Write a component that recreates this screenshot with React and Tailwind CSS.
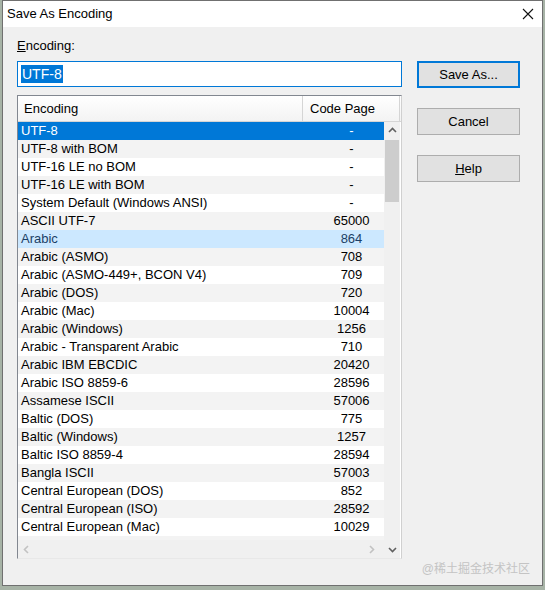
import React from "react";

const ROWS = [
  ["UTF-8", "-"],
  ["UTF-8 with BOM", "-"],
  ["UTF-16 LE no BOM", "-"],
  ["UTF-16 LE with BOM", "-"],
  ["System Default (Windows ANSI)", "-"],
  ["ASCII UTF-7", "65000"],
  ["Arabic", "864"],
  ["Arabic (ASMO)", "708"],
  ["Arabic (ASMO-449+, BCON V4)", "709"],
  ["Arabic (DOS)", "720"],
  ["Arabic (Mac)", "10004"],
  ["Arabic (Windows)", "1256"],
  ["Arabic - Transparent Arabic", "710"],
  ["Arabic IBM EBCDIC", "20420"],
  ["Arabic ISO 8859-6", "28596"],
  ["Assamese ISCII", "57006"],
  ["Baltic (DOS)", "775"],
  ["Baltic (Windows)", "1257"],
  ["Baltic ISO 8859-4", "28594"],
  ["Bangla ISCII", "57003"],
  ["Central European (DOS)", "852"],
  ["Central European (ISO)", "28592"],
  ["Central European (Mac)", "10029"],
  ["Central European (Windows)", "1250"],
];

function Chevron({ dir, className }) {
  const d = {
    up: "M2 7 L5.5 3.5 L9 7",
    down: "M2 4 L5.5 7.5 L9 4",
    left: "M7 2 L3.5 5.5 L7 9",
    right: "M4 2 L7.5 5.5 L4 9",
  }[dir];
  return (
    <svg width="11" height="11" viewBox="0 0 11 11" className={className}>
      <path d={d} fill="none" stroke="currentColor" strokeWidth="1.6" />
    </svg>
  );
}

function Row({ name, page, i }) {
  let cls = i % 2 === 1 ? "bg-[#f3f3f3] text-black" : "bg-white text-black";
  if (i === 0) cls = "bg-[#0078d7] text-white";
  if (i === 6) cls = "bg-[#cce8ff] text-[#1b3f66]";
  return (
    <div className={`flex h-[18px] items-center whitespace-nowrap ${cls}`}>
      <div className="w-[285px] shrink-0 pl-[3px] leading-[18px]">{name}</div>
      <div className="w-[97px] shrink-0 text-center leading-[18px]">{page}</div>
    </div>
  );
}

function Button({ children, focused }) {
  return (
    <button
      className={`h-[27px] w-[103px] bg-[#e1e1e1] text-[13px] text-black ${
        focused ? "border-2 border-[#0078d7]" : "border border-[#adadad]"
      }`}
    >
      {children}
    </button>
  );
}

export default function App() {
  return (
    <div
      className="h-[590px] w-[545px] bg-[#a7b3a6] pl-[2px]"
      style={{ fontFamily: '"Liberation Sans", "Noto Sans CJK SC", sans-serif' }}
    >
      <div className="flex h-[586px] w-[541px] flex-col border border-[#707070] bg-[#f0f0f0]">
        {/* title bar */}
        <div className="flex h-[26px] shrink-0 items-center justify-between bg-white pl-[4px] pr-[8px]">
          <span className="text-[13px] text-black">Save As Encoding</span>
          <svg width="12" height="12" viewBox="0 0 12 12">
            <path d="M1 1 L11 11 M11 1 L1 11" stroke="#111" strokeWidth="1.1" />
          </svg>
        </div>

        <div className="flex gap-[15px] pl-[14px] pt-[11px]">
          <div className="flex w-[385px] flex-col">
            <div className="h-[23px] text-[13px] leading-[16px] text-black">
              <span className="underline">E</span>ncoding:
            </div>
            <div className="flex h-[26px] items-center border border-[#0078d7] bg-white pl-[3px]">
              <span className="bg-[#0078d7] px-[1px] text-[14px] leading-[18px] text-white">UTF-8</span>
            </div>

            {/* list */}
            <div className="mt-[8px] flex h-[464px] flex-col border border-t-[#828790] border-l-[#828790] border-r-[#d0d0d0] border-b-[#e8e8e8] bg-white text-[13px]">
              <div className="flex h-[26px] shrink-0 border-b border-[#d5d5d5] bg-gradient-to-b from-[#ffffff] to-[#f3f3f3]">
                <div className="flex w-[285px] items-center border-r border-[#d5d5d5] pl-[6px]">Encoding</div>
                <div className="flex w-[97px] items-center border-r border-[#d5d5d5] pl-[7px]">Code Page</div>
              </div>
              <div className="flex min-h-0 flex-1">
                <div className="flex w-[366px] flex-col">
                  <div className="min-h-0 flex-1 overflow-hidden">
                    {ROWS.map(([n, p], i) => (
                      <Row key={n} name={n} page={p} i={i} />
                    ))}
                  </div>
                  <div className="flex h-[18px] shrink-0 items-center justify-between bg-[#f0f0f0] px-[3px] text-[#c2c2c2]">
                    <Chevron dir="left" />
                    <Chevron dir="right" className="mr-[4px]" />
                  </div>
                </div>
                <div className="flex w-[16px] flex-col items-center bg-[#f0f0f0] text-[#606060]">
                  <div className="flex h-[17px] items-center">
                    <Chevron dir="up" />
                  </div>
                  <div className="mt-[1px] h-[62px] w-[14px] bg-[#cdcdcd]" />
                  <div className="flex-1" />
                  <div className="flex h-[17px] items-center">
                    <Chevron dir="down" />
                  </div>
                </div>
              </div>
            </div>
          </div>

          <div className="flex flex-col gap-[20px] pt-[23px]">
            <Button focused>Save As...</Button>
            <Button>Cancel</Button>
            <Button>
              <span className="underline">H</span>elp
            </Button>
          </div>
        </div>

        <div className="pr-[12px] pt-[1px] text-right text-[12px] text-[#c4c4c4]">@稀土掘金技术社区</div>
      </div>
    </div>
  );
}
